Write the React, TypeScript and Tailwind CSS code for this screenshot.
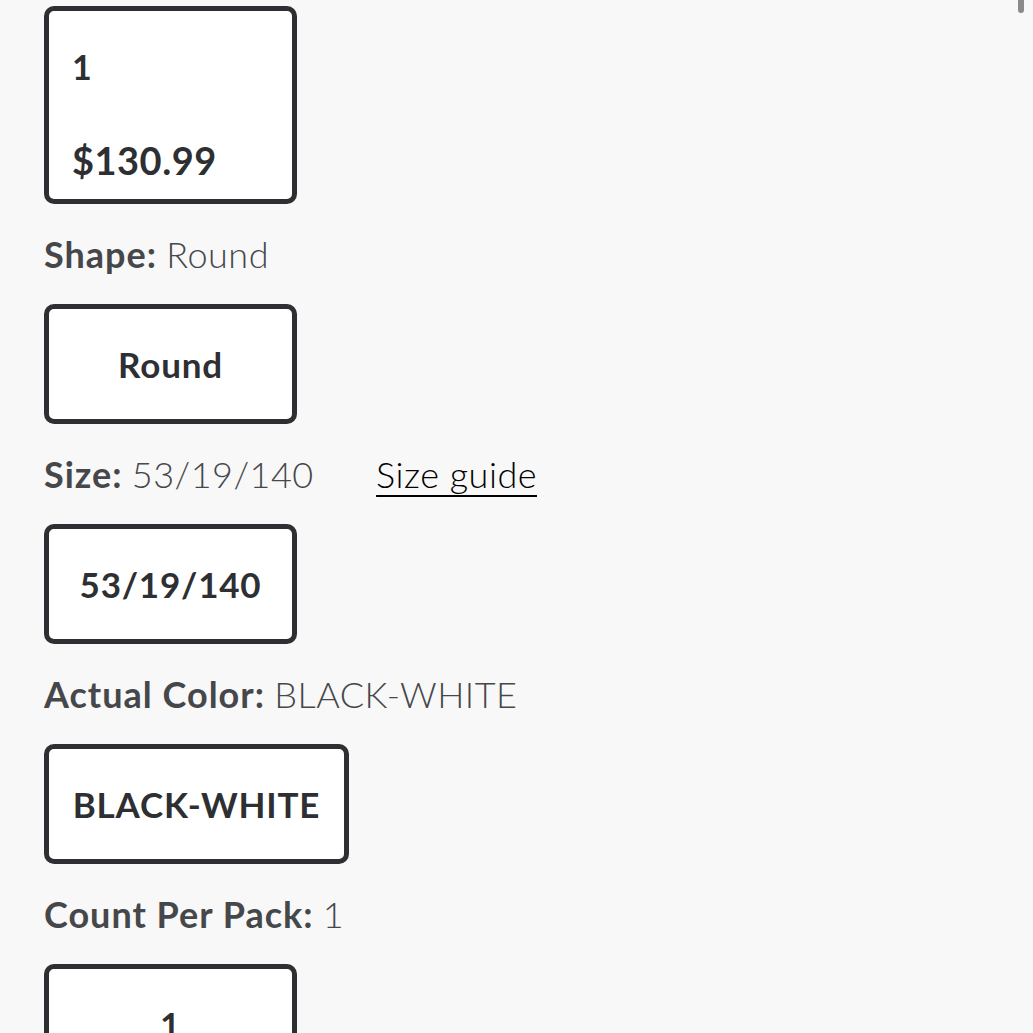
import React from 'react';

const font = { fontFamily: 'Lato, "Open Sans", sans-serif' };

const Label = ({ name, value, children }: { name: string; value: string; children?: React.ReactNode }) => (
  <div className="h-[100px] flex items-center justify-between w-[493px]">
    <div className="text-[36px] leading-none text-[#46474a]">
      <span className="font-bold tracking-[1px]">{name}:</span>{' '}
      <span className="font-light tracking-[0.5px]">{value}</span>
    </div>
    {children}
  </div>
);

const Option = ({ label, wide }: { label: string; wide?: boolean }) => (
  <div
    className={`h-[120px] ${wide ? 'w-[305px]' : 'w-[253px]'} bg-white border-[5px] border-[#2e2f32] rounded-[10px] flex items-center justify-center text-[35px] font-bold tracking-[0.8px] text-[#2e2f32]`}
  >
    {label}
  </div>
);

export default function App() {
  return (
    <div style={font} className="relative h-[1033px] overflow-hidden bg-[#f8f8f8] pl-[44px] pt-[6px]">
      {/* selected pack */}
      <div className="w-[253px] h-[198px] bg-white border-[5px] border-[#2e2f32] rounded-[10px] pl-[23px] flex flex-col text-[#2e2f32] font-bold">
        <span className="text-[34px] leading-none mt-[39px]">1</span>
        <span className="text-[38px] leading-none mt-[57px] tracking-[0.5px]">$130.99</span>
      </div>

      <Label name="Shape" value="Round" />
      <Option label="Round" />

      <Label name="Size" value="53/19/140">
        <a className="text-[36px] leading-none text-black font-light tracking-[0.5px] underline underline-offset-[7px] decoration-2">
          Size guide
        </a>
      </Label>
      <Option label="53/19/140" />

      <Label name="Actual Color" value="BLACK-WHITE" />
      <Option label="BLACK-WHITE" wide />

      <Label name="Count Per Pack" value="1" />
      <Option label="1" />

      {/* scrollbar thumb */}
      <div className="absolute top-0 right-[9px] w-[6px] h-[13px] rounded-b-full bg-[#8a8a8a]" />
    </div>
  );
}
